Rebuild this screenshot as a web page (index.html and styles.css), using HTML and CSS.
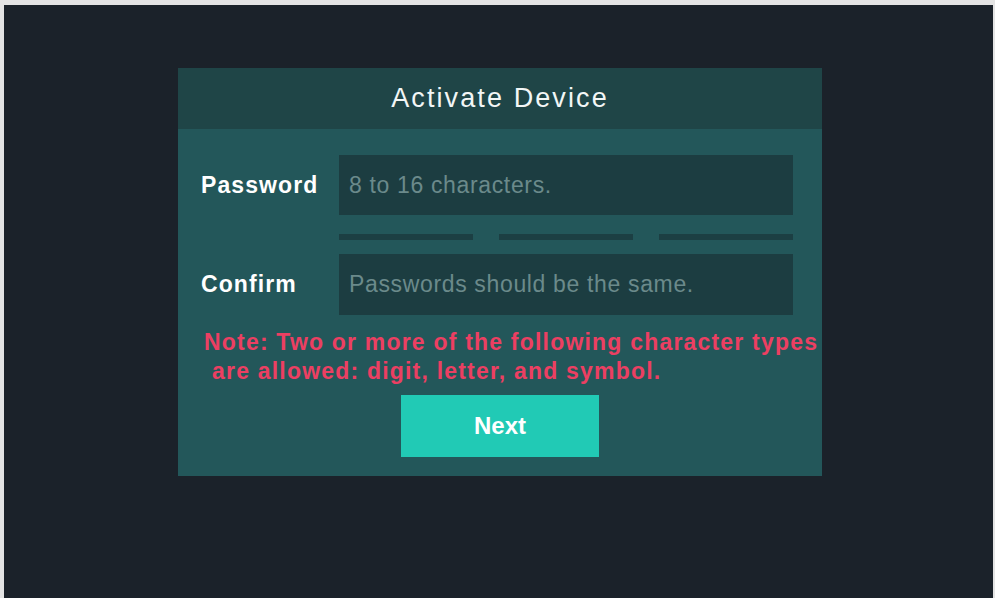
FILE: index.html
```html
<!DOCTYPE html>
<html lang="en">
<head>
    <meta charset="UTF-8">
    <meta name="viewport" content="width=device-width, initial-scale=1.0">
    <title>Activate Device</title>
    <link rel="stylesheet" href="styles.css">
</head>
<body>

<div class="screen">
    <div class="card">
        <header class="card-header">
            <h1>Activate Device</h1>
        </header>

        <form class="card-body" id="activateForm">
            <div class="row">
                <label class="label" for="password">Password</label>
                <input class="field" type="password" id="password" placeholder="8 to 16 characters.">
            </div>

            <div class="strength">
                <span class="bar"></span>
                <span class="bar"></span>
                <span class="bar"></span>
            </div>

            <div class="row row-confirm">
                <label class="label" for="confirm">Confirm</label>
                <input class="field" type="password" id="confirm" placeholder="Passwords should be the same.">
            </div>

            <p class="note">
                <span class="note-line">Note: Two or more of the following character types</span>
                <span class="note-line indent">are allowed: digit, letter, and symbol.</span>
            </p>

            <button type="submit" class="next">Next</button>
        </form>
    </div>
</div>

</body>
</html>
```

FILE: styles.css
```css
html, body {
    height: 100%;
}

body {
    margin: 0;
    padding: 5px 2px 0 4px;
    box-sizing: border-box;
    background-color: #e4e4e4;
    font-family: "Liberation Sans", Arial, sans-serif;
}

.screen {
    height: 100%;
    background-color: #1b222a;
    padding: 63px 0 0 174px;
    box-sizing: border-box;
}

.card {
    width: 644px;
    background-color: #23575a;
}

.card-header {
    height: 61px;
    background-color: #1f4547;
    display: flex;
    align-items: center;
    justify-content: center;
}

.card-header h1 {
    margin: 0;
    color: #f2f6f6;
    font-size: 27px;
    font-weight: normal;
    letter-spacing: 2.1px;
}

.card-body {
    padding: 26px 29px 19px 23px;
    display: flex;
    flex-direction: column;
}

.row {
    display: flex;
    align-items: center;
    height: 60px;
}

.row-confirm {
    margin-top: 14px;
    height: 61px;
}

.label {
    width: 138px;
    flex-shrink: 0;
    color: #ffffff;
    font-size: 23px;
    font-weight: bold;
    letter-spacing: 1.1px;
}

.field {
    flex: 1;
    height: 100%;
    box-sizing: border-box;
    border: none;
    outline: none;
    background-color: #1c3d41;
    padding: 0 10px;
    color: #d0dcdc;
    font-family: inherit;
    font-size: 23px;
    letter-spacing: 0.65px;
}

.field::placeholder {
    color: #6b8a8b;
}

.strength {
    display: flex;
    gap: 26px;
    margin: 19px 0 0 138px;
}

.bar {
    flex: 1;
    height: 6px;
    background-color: #1c3f43;
}

.note {
    margin: 13px 0 0 3px;
    color: #ec3f62;
    font-size: 23px;
    font-weight: bold;
    line-height: 29px;
    letter-spacing: 1.2px;
    white-space: nowrap;
}

.note-line {
    display: block;
}

.indent {
    padding-left: 8px;
}

.next {
    align-self: center;
    margin-top: 9px;
    margin-left: 6px;
    width: 198px;
    height: 62px;
    border: none;
    background-color: #21cab5;
    color: #ffffff;
    font-family: inherit;
    font-size: 24px;
    font-weight: bold;
    cursor: pointer;
}
```
